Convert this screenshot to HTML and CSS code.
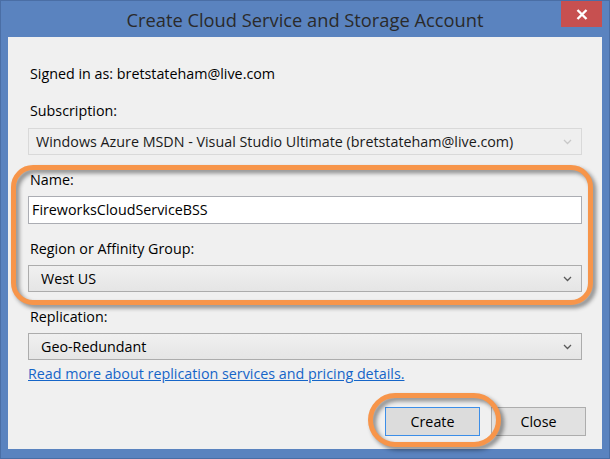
FILE: index.html
```html
<!DOCTYPE html>
<html>
<head>
<meta charset="utf-8">
<link rel="stylesheet" href="styles.css">
</head>
<body>
<div class="window">
  <div class="titlebar">
    <div class="title">Create Cloud Service and Storage Account</div>
    <button class="close-btn" aria-label="Close">
      <svg width="12" height="11" viewBox="0 0 12 11"><path d="M1.5 1 L10.5 10 M10.5 1 L1.5 10" stroke="#fff" stroke-width="2.4" fill="none"/></svg>
    </button>
  </div>
  <div class="client">
    <div class="signed">Signed in as: bretstateham@live.com</div>

    <div class="label label-sub">Subscription:</div>
    <div class="select disabled">
      <span class="select-text sub-text">Windows Azure MSDN - Visual Studio Ultimate (bretstateham@live.com)</span>
      <svg class="chev" width="9" height="6" viewBox="0 0 9 6"><path d="M1 1 L4.5 4.5 L8 1" stroke="#c8c8c8" stroke-width="1.3" fill="none"/></svg>
    </div>

    <div class="label label-group">Name:</div>
    <div class="input">FireworksCloudServiceBSS</div>

    <div class="label label-group">Region or Affinity Group:</div>
    <div class="select">
      <span class="select-text">West US</span>
      <svg class="chev" width="9" height="6" viewBox="0 0 9 6"><path d="M1 1 L4.5 4.5 L8 1" stroke="#5a5a5a" stroke-width="1.3" fill="none"/></svg>
    </div>

    <div class="label label-group">Replication:</div>
    <div class="select">
      <span class="select-text">Geo-Redundant</span>
      <svg class="chev" width="9" height="6" viewBox="0 0 9 6"><path d="M1 1 L4.5 4.5 L8 1" stroke="#5a5a5a" stroke-width="1.3" fill="none"/></svg>
    </div>

    <div class="link-row"><a class="link" href="#">Read more about replication services and pricing details.</a></div>

    <div class="buttons">
      <button class="btn btn-default">Create</button>
      <button class="btn">Close</button>
    </div>

    <div class="highlight highlight-fields"></div>
    <div class="highlight highlight-create"></div>
  </div>
</div>
</body>
</html>
```

FILE: styles.css
```css
html, body {
  margin: 0;
  padding: 0;
  background: #5a83bf;
}

.window {
  width: 610px;
  height: 459px;
  box-sizing: border-box;
  border: 1px solid #4a6ea5;
  background: #5a83bf;
  font-family: "Open Sans", "Noto Sans", sans-serif;
  font-size: 14.3px;
  color: #000;
}

.titlebar {
  height: 36px;
  display: grid;
  grid-template-columns: 1fr auto 1fr;
}

.title {
  grid-column: 2;
  font-size: 18.3px;
  line-height: 36px;
  color: #2a2a2a;
  white-space: nowrap;
  padding-top: 1px;
}

.close-btn {
  grid-column: 3;
  justify-self: end;
  align-self: start;
  margin-right: 7px;
  width: 41px;
  height: 26px;
  border: none;
  padding: 0;
  background: #c75050;
  display: flex;
  align-items: center;
  justify-content: center;
}

.client {
  position: relative;
  margin: 0 7px;
  height: 412px;
  box-sizing: border-box;
  background: #f0f0f0;
  padding: 27px 20px 0 20px;
  line-height: 20px;
}

.signed {
  padding-left: 2px;
}

.label {
  padding-left: 2px;
  margin-bottom: 6px;
}

.label-sub {
  margin-top: 17px;
  margin-bottom: 7px;
}

.label-group {
  margin-top: 15px;
}

.select {
  height: 27px;
  box-sizing: border-box;
  border: 1px solid #acacac;
  background: linear-gradient(#f0f0f0, #e5e5e5);
  display: flex;
  align-items: center;
  justify-content: space-between;
  padding: 0 9px 0 12px;
}

.select.disabled {
  border-color: #d9d9d9;
  background: #efefef;
  padding-left: 7px;
}

.select-text {
  white-space: nowrap;
}

.sub-text {
  color: #1a1a1a;
}

.input {
  height: 28px;
  box-sizing: border-box;
  border: 1px solid #abadb3;
  background: #fff;
  padding: 0 3px;
  line-height: 26px;
}

.link-row {
  margin-top: 4px;
  height: 20px;
}

.link {
  color: #1565c8;
  text-decoration: underline;
}

.buttons {
  display: flex;
  justify-content: flex-end;
  gap: 11px;
  margin-top: 23px;
  margin-right: -4px;
}

.btn {
  width: 95px;
  height: 29px;
  box-sizing: border-box;
  border: 1px solid #adadad;
  background: #e1e1e1;
  font-family: "Open Sans", "Noto Sans", sans-serif;
  font-size: 14.3px;
  color: #000;
  padding: 0;
}

.btn-default {
  border-color: #3c8ee8;
  background: #dcdcdc;
}

.highlight {
  position: absolute;
  box-sizing: border-box;
  border: 5px solid #f7954a;
  filter: drop-shadow(3px 3px 2px rgba(0, 0, 0, 0.45));
  pointer-events: none;
}

.highlight-fields {
  left: 3px;
  top: 128px;
  width: 582px;
  height: 140px;
  border-radius: 22px;
}

.highlight-create {
  left: 360px;
  top: 356px;
  width: 133px;
  height: 54px;
  border-radius: 27px;
}
```
